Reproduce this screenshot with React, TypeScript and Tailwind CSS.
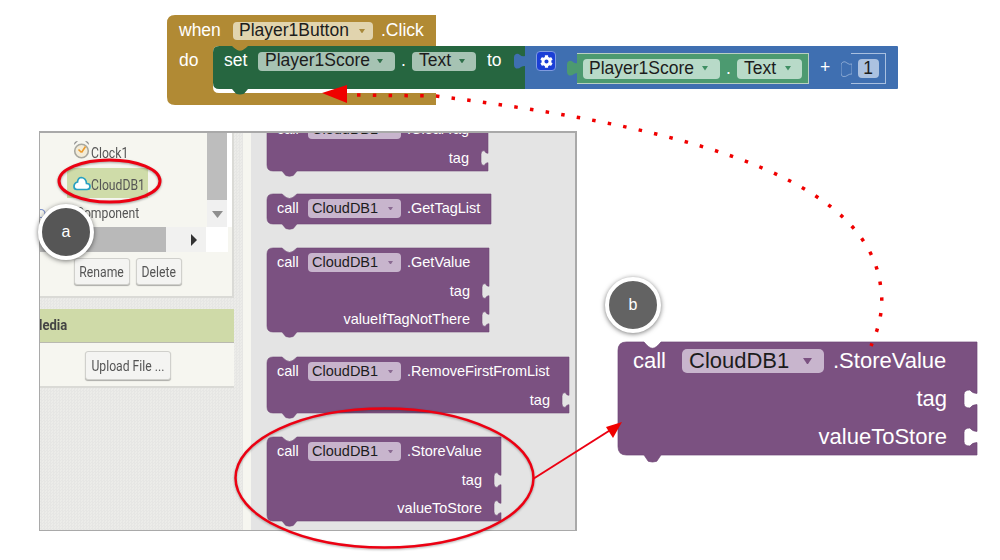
import React from "react";
import { FaCog } from "react-icons/fa";

const ARIAL = "font-['Liberation_Sans',Arial,sans-serif]";
const ROBOTO = "font-['Roboto','Liberation_Sans',sans-serif]";

function blockPath(w: number, h: number, s: number, sockets: number[], sw: number, nx = 15, nw = 15) {
  const r = 6 * s;
  const d = 4.5 * s;
  const R = w;
  let p = `M0 ${r} Q0 0 ${r} 0 H${nx} Q${nx + 0.3 * nw} ${d} ${nx + 0.5 * nw} ${d} Q${nx + 0.7 * nw} ${d} ${nx + nw} 0 H${R}`;
  for (const y of sockets) {
    const hh = s > 1.2 ? 9 : 7.5;
    const neck = hh * 0.62;
    p += ` V${y - neck} Q${R - sw * 0.35} ${y - neck} ${R - sw * 0.55} ${y - hh} Q${R - sw} ${y - hh} ${R - sw} ${y - hh * 0.5} V${y + hh * 0.5} Q${R - sw} ${y + hh} ${R - sw * 0.55} ${y + hh} Q${R - sw * 0.35} ${y + neck} ${R} ${y + neck}`;
  }
  p += ` V${h} H${nx + nw}`;
  p += ` L${nx + 0.75 * nw} ${h + d} Q${nx + nw / 2} ${h + d + 1.5} ${nx + 0.25 * nw} ${h + d} L${nx} ${h}`;
  p += ` H${r} Q0 ${h} 0 ${h - r} Z`;
  return p;
}

function Tri({ size, color }: { size: number; color: string }) {
  return (
    <svg width={size} height={size * 0.75} viewBox="0 0 8 6" className="shrink-0">
      <path d="M0 0H8L4 6Z" fill={color} />
    </svg>
  );
}

function Pill(props: {
  text: string;
  className: string;
  tri: string;
  triSize?: number;
}) {
  return (
    <span className={`flex shrink-0 items-center justify-between rounded-[4px] text-[#1c1c1c] ${props.className}`}>
      <span>{props.text}</span>
      <Tri size={props.triSize ?? 5} color={props.tri} />
    </span>
  );
}

function CallBlock(props: {
  name: string;
  w: number;
  labels?: string[];
  className?: string;
}) {
  const labels = props.labels ?? [];
  const h = labels.length === 0 ? 30 : 28 + labels.length * 28;
  const sockets = labels.map((_, i) => 43 + i * 28);
  return (
    <div className={`relative shrink-0 text-[14.5px] leading-none text-white ${ARIAL} ${props.className ?? ""}`} style={{ width: props.w, height: h }}>
      <svg className="absolute inset-0 overflow-visible" width={props.w} height={h}>
        <path d={blockPath(props.w, h, 1, sockets, 7)} fill="#7B5181" stroke="#6e4675" strokeWidth="0.6" />
      </svg>
      <div className="relative flex h-[29px] items-center pl-[10px]">
        <span className="w-[31px]">call</span>
        <Pill text="CloudDB1" tri="#8a6a92" triSize={5} className="h-[19px] w-[93px] bg-[#C8B5CD] pl-[4px] pr-[8px]" />
        <span className="ml-[6px]">{props.name}</span>
      </div>
      {labels.map((l) => (
        <div key={l} className="relative flex h-[28px] items-center justify-end pr-[19px]">
          {l}
        </div>
      ))}
    </div>
  );
}

function LeftTab({ color, stroke }: { color: string; stroke?: string }) {
  return (
    <svg width="11" height="17" viewBox="0 0 11 17" className="absolute">
      <path d="M11 3 Q8 4 6 2 Q4 0 2 1 Q0 2 0 4 V12 Q0 15 2 15.5 Q5 16 7 14 Q8.5 13 11 13 Z" fill={color} stroke={stroke ?? "none"} strokeWidth="0.7" />
    </svg>
  );
}

function TopBlocks() {
  const goldPath = "M0 8 Q0 0 8 0 H269 V31 H52 Q46 31 46 37 V72 Q46 78 52 78 H269 V90 H8 Q0 90 0 82 Z M64 30 H82 V38 H64 Z";
  return (
    <div className={`relative ml-[167px] h-[90px] w-[731px] text-[17.5px] leading-none text-white ${ARIAL}`}>
      <svg className="absolute left-0 top-0" width="270" height="91">
        <path d={goldPath} fill="#B18A34" />
      </svg>
      <div className="relative flex h-[31px] items-center pl-[12px] pt-[1px]">
        <span className="w-[54px]">when</span>
        <Pill text="Player1Button" tri="#a8893c" triSize={6} className="h-[18px] w-[140px] bg-[#E1D4AE] pl-[6px] pr-[8px]" />
        <span className="ml-[8px]">.Click</span>
      </div>
      <div className="relative flex h-[43px]">
        <span className="w-[46px] pl-[12px] pt-[6px]">do</span>
        <div className="relative h-[43px] w-[312px] shrink-0">
          <svg className="absolute inset-0 overflow-visible" width="312" height="43">
            <path d={blockPath(312, 43, 1.05, [], 0, 19, 16)} fill="#266640" />
          </svg>
          <div className="relative flex h-[20px] items-center pl-[11px] pt-[5px] box-content">
            <span className="w-[34px]">set</span>
            <Pill text="Player1Score" tri="#2f6f4a" triSize={6} className="h-[19px] w-[137px] bg-[#A6C3B3] pl-[7px] pr-[12px]" />
            <span className="w-[17px] text-center">.</span>
            <Pill text="Text" tri="#2f6f4a" triSize={6} className="h-[19px] w-[64px] bg-[#A6C3B3] pl-[7px] pr-[11px]" />
            <span className="ml-[11px]">to</span>
          </div>
        </div>
        <div className="relative flex h-[43px] w-[373px] shrink-0 items-start rounded-r-[1px] bg-[#3F6FB1]">
          <div className="absolute -left-[11px] top-[7px] h-[17px] w-[11px]"><LeftTab color="#3F6FB1" /></div>
          <span className="ml-[11px] mt-[5px] flex h-[20px] w-[20px] items-center justify-center rounded-[4px] border border-[#7f9be0] bg-[#1b3fd6] text-white">
            <FaCog size={13} />
          </span>
          <div className="relative ml-[21px] mt-[7px] flex h-[31px] w-[232px] items-center border border-[#b9d0c2] border-l-0 bg-[#4C9A70] pl-[6px]">
            <div className="absolute -left-[10px] top-[6px] h-[17px] w-[11px]"><LeftTab color="#4C9A70" /></div>
            <Pill text="Player1Score" tri="#3f8f63" triSize={6} className="h-[20px] w-[137px] bg-[#B8DAC8] pl-[6px] pr-[12px]" />
            <span className="w-[17px] text-center">.</span>
            <Pill text="Text" tri="#3f8f63" triSize={6} className="h-[20px] w-[65px] bg-[#B8DAC8] pl-[7px] pr-[11px]" />
          </div>
          <span className="ml-[10px] mt-[13px] w-[12px] text-center">+</span>
          <div className="relative ml-[20px] mt-[7px] flex h-[31px] w-[35px] items-center justify-center border border-[#a9c0e0] bg-[#3F6FB1] border-l-0">
            <div className="absolute -left-[10px] top-[7px] h-[17px] w-[11px]"><LeftTab color="#3F6FB1" stroke="#a9c0e0" /></div>
            <span className="flex h-[19px] w-[21px] items-center justify-center rounded-[4px] bg-[#ABC1E0] text-[#1c1c1c]">1</span>
          </div>
        </div>
      </div>
    </div>
  );
}

function ClockIcon() {
  return (
    <svg width="17" height="19" viewBox="0 0 17 19" className="shrink-0">
      <path d="M1 5 Q1 1 5 1 Z M16 5 Q16 1 12 1 Z" fill="#8d8d8d" />
      <circle cx="8.5" cy="11" r="6.8" fill="#f3ecd8" stroke="#a8a8a0" strokeWidth="1.6" />
      <path d="M8.5 12.5 L5.5 9.5 M8.5 12.5 L12.5 6.5" stroke="#ec9c2e" strokeWidth="1.6" fill="none" />
    </svg>
  );
}

function CloudIcon() {
  return (
    <svg width="18" height="15" viewBox="0 0 18 15" className="shrink-0">
      <path d="M4 13.5 H14 Q17 13.5 17 10.5 Q17 7.5 13.5 7.5 Q13 2 8.5 1.5 Q5 1.5 4.5 6 Q1 7 1 10.5 Q1 13.5 4 13.5 Z" fill="#ffffff" stroke="#27a0c2" strokeWidth="1.7" />
    </svg>
  );
}

function Narrow({ children, className }: { children: React.ReactNode; className?: string }) {
  return <span className={`inline-block whitespace-nowrap scale-x-[.87] ${className ?? "origin-center"}`}>{children}</span>;
}

function GrayButton({ label, w, h }: { label: string; w: string; h: string }) {
  return (
    <button className={`flex items-center justify-center rounded-[3px] border border-[#d0d0cc] bg-[#f4f4f2] text-[14px] leading-none text-[#555] shadow-[0_1px_1px_rgba(0,0,0,0.3)] ${w} ${h} ${ROBOTO}`}>
      <Narrow>{label}</Narrow>
    </button>
  );
}

function LeftColumn() {
  return (
    <div className="h-full w-[203px] shrink-0 bg-[#e9e9e7] bg-[repeating-conic-gradient(#e6e6e4_0_25%,#ecece9_0_50%)] bg-[length:3px_3px]">
      <div className={`h-[165px] w-[194px] border-b-2 border-r-2 border-[#dadad6] bg-[#f6f6f0] text-[14px] leading-none text-[#555] ${ROBOTO}`}>
        <div className="flex h-[94px] bg-white">
          <div className="relative h-full w-[167px] overflow-hidden bg-[#f6f6f0] pt-[7px]">
            <div className="flex items-start pl-[33px]">
              <ClockIcon />
              <span className="ml-[1px] mt-[6px] w-[40px]"><Narrow className="origin-left">Clock1</Narrow></span>
            </div>
            <div className="ml-[27px] mt-[8px] flex h-[30px] w-[81px] items-center bg-[#CFDCA9] pl-[6px]">
              <CloudIcon />
              <span className="ml-[0px] pt-[3px]"><Narrow className="origin-left">CloudDB1</Narrow></span>
            </div>
            <div className="mt-[8px] flex items-center">
              <svg width="6" height="11" viewBox="0 0 6 11" className="shrink-0">
                <circle cx="1" cy="5.5" r="4" fill="none" stroke="#7f93cc" strokeWidth="1.2" />
              </svg>
              <span className="ml-[30px]"><Narrow className="origin-left">Component</Narrow></span>
            </div>
          </div>
          <div className="flex h-full w-[20px] flex-col bg-[#f0f0f0]">
            <div className="h-[67px] bg-[#bdbdbd]" />
            <div className="flex flex-1 items-center justify-center pt-[2px]">
              <svg width="11" height="7" viewBox="0 0 11 7"><path d="M0 0H11L5.5 7Z" fill="#8e8e8e" /></svg>
            </div>
          </div>
        </div>
        <div className="flex h-[25px] w-[188px]">
          <div className="h-full w-[126px] bg-[#b9b9b9]" />
          <div className="flex h-full w-[40px] items-center justify-end bg-[#f1f1f0] pr-[9px]">
            <svg width="6" height="12" viewBox="0 0 6 12"><path d="M0 0V12L6 6Z" fill="#333" /></svg>
          </div>
          <div className="h-full flex-1 bg-white" />
        </div>
        <div className="flex gap-[6px] pl-[34px] pt-[6px]">
          <GrayButton label="Rename" w="w-[56px]" h="h-[27px]" />
          <GrayButton label="Delete" w="w-[46px]" h="h-[27px]" />
        </div>
      </div>
      <div className={`mt-[11px] flex h-[34px] w-[194px] items-center overflow-hidden border-b border-[#b9b9b0] bg-[#CFDAA8] text-[15px] font-bold leading-none text-[#444] ${ROBOTO}`}>
        <span className="-ml-[9px]"><Narrow className="origin-left">Media</Narrow></span>
      </div>
      <div className="flex h-[45px] w-[194px] justify-start border-b-2 border-[#dadad6] bg-[#f6f6f0] pl-[45px] pt-[8px]">
        <GrayButton label="Upload File ..." w="w-[86px]" h="h-[29px]" />
      </div>
    </div>
  );
}

function Panel() {
  return (
    <div className="ml-[39px] flex h-[400px] w-[538px] overflow-hidden border border-r-2 border-t-2 border-[#a9a9a9] bg-[#e4e4e4]">
      <LeftColumn />
      <div className="h-full w-[8px] shrink-0 bg-[#f6f6f0]" />
      <div className="flex h-full min-w-0 flex-1 flex-col items-start overflow-hidden pl-[16px]">
        <CallBlock name=".ClearTag" w={221} labels={["tag"]} className="-mt-[18px]" />
        <CallBlock name=".GetTagList" w={224} className="mt-[23px]" />
        <CallBlock name=".GetValue" w={222} labels={["tag", "valueIfTagNotThere"]} className="mt-[24px]" />
        <CallBlock name=".RemoveFirstFromList" w={302} labels={["tag"]} className="mt-[25px]" />
        <CallBlock name=".StoreValue" w={234} labels={["tag", "valueToStore"]} className="mt-[24px]" />
      </div>
    </div>
  );
}

function BigBlock() {
  return (
    <div className={`absolute left-[618px] top-[342px] h-[113px] w-[359px] text-[22px] leading-none text-white ${ARIAL}`}>
      <svg className="absolute inset-0 overflow-visible" width="359" height="113">
        <path d={blockPath(359, 113, 1.4, [57, 95], 13, 26, 17)} fill="#7B5181" stroke="#6e4675" strokeWidth="0.7" />
      </svg>
      <div className="relative flex h-[38px] items-center pl-[15px]">
        <span className="w-[49px]">call</span>
        <Pill text="CloudDB1" tri="#7B5181" triSize={9} className="h-[24px] w-[142px] rounded-[5px] bg-[#C8B5CD] pl-[7px] pr-[12px]" />
        <span className="ml-[9px]">.StoreValue</span>
      </div>
      <div className="relative flex h-[38px] items-center justify-end pr-[30px]">tag</div>
      <div className="relative flex h-[38px] items-center justify-end pr-[30px]">valueToStore</div>
    </div>
  );
}

function Marker({ label, className }: { label: string; className: string }) {
  return (
    <div className={`absolute flex h-[56px] w-[56px] items-center justify-center rounded-full border-[4px] border-white text-[16px] text-white shadow-[0_1px_5px_rgba(0,0,0,0.55)] ${ARIAL} ${className}`}>
      {label}
    </div>
  );
}

function Annotations() {
  return (
    <svg className="pointer-events-none absolute left-0 top-0" width="1000" height="560">
      <ellipse cx="109.5" cy="181" rx="50.5" ry="21" fill="none" stroke="#ec0012" strokeWidth="3" className="drop-shadow-[0_1px_1px_rgba(0,0,0,0.35)]" />
      <ellipse cx="384.5" cy="478" rx="149" ry="69.5" fill="none" stroke="#ec0012" strokeWidth="2.5" className="drop-shadow-[0_1px_1px_rgba(0,0,0,0.3)]" />
      <path d="M533 479 L612 429" stroke="#ec0012" strokeWidth="2" fill="none" />
      <path d="M622 422 L606 427 L613 438 Z" fill="#f00000" />
      <path
        d="M357 95 L436 96 C640 122 870 165 881 290 C884 310 878 330 871 346"
        fill="none"
        stroke="#f00000"
        strokeWidth="3.5"
        strokeDasharray="3.5 12.3"
      />
      <path d="M322 93 L347 85 V103 Z" fill="#f00000" />
    </svg>
  );
}

export default function App() {
  return (
    <div className="relative h-[560px] w-[1000px] overflow-hidden bg-white">
      <div className="h-[131px] pt-[15px]">
        <TopBlocks />
      </div>
      <Panel />
      <BigBlock />
      <Annotations />
      <Marker label="a" className="left-[38px] top-[204px] bg-[#565656]" />
      <Marker label="b" className="left-[605px] top-[277px] bg-[#636363]" />
    </div>
  );
}
